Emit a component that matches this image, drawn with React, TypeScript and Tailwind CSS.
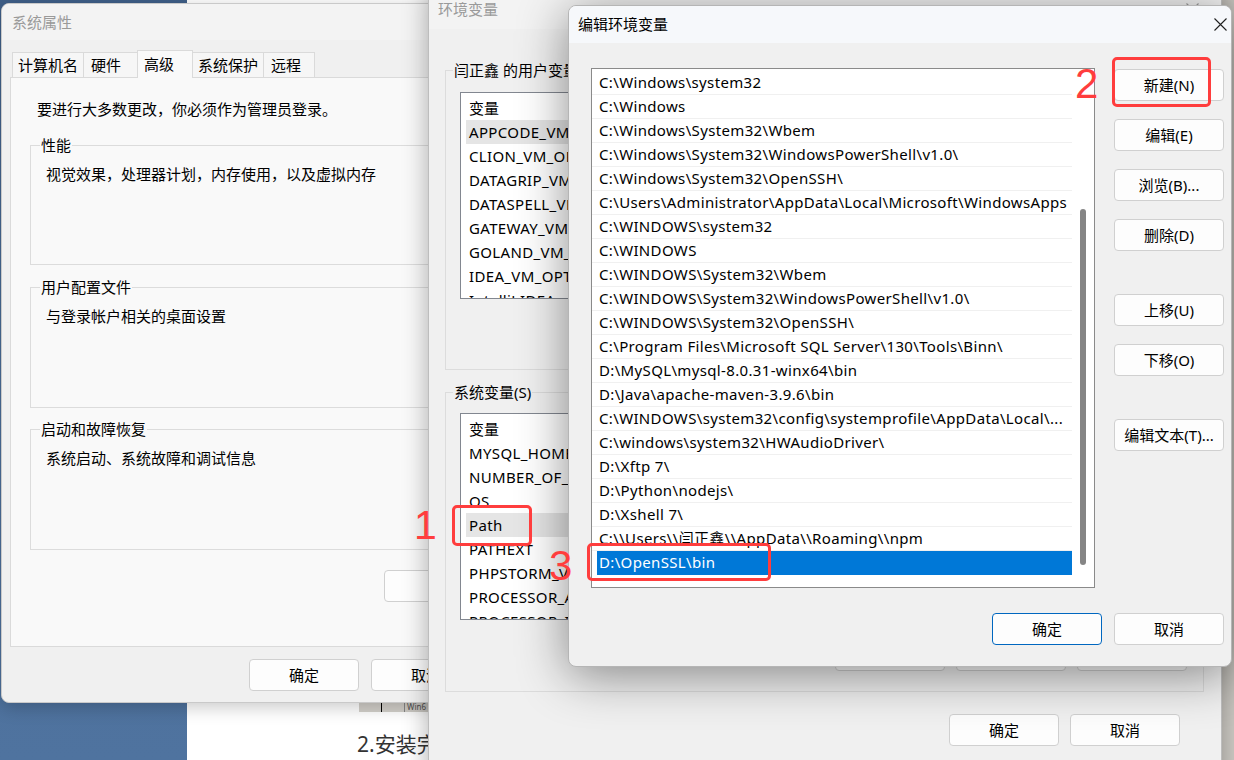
import React from "react";

const FONT = "font-['Noto_Sans','Noto_Sans_CJK_SC',sans-serif]";

const editItems = [
  "C:\\Windows\\system32",
  "C:\\Windows",
  "C:\\Windows\\System32\\Wbem",
  "C:\\Windows\\System32\\WindowsPowerShell\\v1.0\\",
  "C:\\Windows\\System32\\OpenSSH\\",
  "C:\\Users\\Administrator\\AppData\\Local\\Microsoft\\WindowsApps",
  "C:\\WINDOWS\\system32",
  "C:\\WINDOWS",
  "C:\\WINDOWS\\System32\\Wbem",
  "C:\\WINDOWS\\System32\\WindowsPowerShell\\v1.0\\",
  "C:\\WINDOWS\\System32\\OpenSSH\\",
  "C:\\Program Files\\Microsoft SQL Server\\130\\Tools\\Binn\\",
  "D:\\MySQL\\mysql-8.0.31-winx64\\bin",
  "D:\\Java\\apache-maven-3.9.6\\bin",
  "C:\\WINDOWS\\system32\\config\\systemprofile\\AppData\\Local\\...",
  "C:\\windows\\system32\\HWAudioDriver\\",
  "D:\\Xftp 7\\",
  "D:\\Python\\nodejs\\",
  "D:\\Xshell 7\\",
  "C:\\\\Users\\\\闫正鑫\\\\AppData\\\\Roaming\\\\npm",
];

const userVars = [
  "APPCODE_VM_OPTIONS",
  "CLION_VM_OPTIONS",
  "DATAGRIP_VM_OPTIONS",
  "DATASPELL_VM_OPTIONS",
  "GATEWAY_VM_OPTIONS",
  "GOLAND_VM_OPTIONS",
  "IDEA_VM_OPTIONS",
  "IntelliJ IDEA",
];

const sysVars = [
  "MYSQL_HOME",
  "NUMBER_OF_PROCESSORS",
  "OS",
  "Path",
  "PATHEXT",
  "PHPSTORM_VM_OPTIONS",
  "PROCESSOR_ARCHITECTURE",
  "PROCESSOR_IDENTIFIER",
];

function Btn({ children, primary = false }: { children?: React.ReactNode; primary?: boolean }) {
  return (
    <div
      className={
        primary
          ? "flex h-[32px] w-[110px] shrink-0 items-center justify-center rounded-[4px] border border-[#0067c0] bg-[#fdfdfd] text-[15px] text-black"
          : "flex h-[32px] w-[110px] shrink-0 items-center justify-center rounded-[4px] border border-[#d0d0d0] bg-[#fdfdfd] text-[15px] text-black"
      }
    >
      {children}
    </div>
  );
}

function CloseX({ color = "#202020" }: { color?: string }) {
  return (
    <svg width="13" height="13" viewBox="0 0 13 13">
      <path d="M0.5 0.5L12.5 12.5M12.5 0.5L0.5 12.5" stroke={color} strokeWidth="1.1" fill="none" />
    </svg>
  );
}

function GroupBox({ title, text, className }: { title: string; text: string; className: string }) {
  return (
    <div className={className}>
      <span className="absolute left-[9px] top-[-11px] bg-[#f9f9f9] px-[1px] leading-[20px]">{title}</span>
      <div className="pl-[15px] pt-[18px] leading-[20px]">{text}</div>
    </div>
  );
}

function SystemProperties() {
  return (
    <div className="absolute left-[1px] top-[3px] flex h-[700px] w-[560px] flex-col overflow-hidden rounded-[8px] border border-[#c9c9c9] bg-[#f0f0f0] text-[15px] text-black shadow-[0_4px_18px_rgba(0,0,0,0.22)]">
      <div className="flex h-[36px] items-center bg-[#f3f3f3] pl-[10px] text-[#9a9a9a]">系统属性</div>
      <div className="flex flex-col pl-[8px] pt-[10px]">
        <div className="flex h-[27px] items-end pl-[2px]">
          <div className="flex h-[25px] w-[71px] items-center border-l border-t border-[#dadada] bg-[#f6f6f6] pl-[5px]">计算机名</div>
          <div className="flex h-[25px] w-[54px] items-center border-l border-t border-[#dadada] bg-[#f6f6f6] pl-[7px]">硬件</div>
          <div className="relative z-10 mb-[-1px] flex h-[28px] w-[56px] items-start border-l border-r border-t border-[#dadada] bg-[#f9f9f9] pl-[6px] pt-[2px]">高级</div>
          <div className="flex h-[25px] w-[70px] items-center border-t border-[#dadada] bg-[#f6f6f6] pl-[5px]">系统保护</div>
          <div className="flex h-[25px] w-[52px] items-center border-l border-r border-t border-[#dadada] bg-[#f6f6f6] pl-[7px]">远程</div>
        </div>
        <div className="flex h-[570px] flex-col border border-[#dadada] bg-[#f9f9f9]">
          <div className="pl-[26px] pt-[21px] leading-[20px]">要进行大多数更改，你必须作为管理员登录。</div>
          <GroupBox
            className="relative ml-[19px] mr-[10px] mt-[26px] h-[120px] border border-[#dcdcdc]"
            title="性能"
            text="视觉效果，处理器计划，内存使用，以及虚拟内存"
          />
          <GroupBox
            className="relative ml-[19px] mr-[10px] mt-[22px] h-[121px] border border-[#dcdcdc]"
            title="用户配置文件"
            text="与登录帐户相关的桌面设置"
          />
          <GroupBox
            className="relative ml-[19px] mr-[10px] mt-[21px] h-[121px] border border-[#dcdcdc]"
            title="启动和故障恢复"
            text="系统启动、系统故障和调试信息"
          />
          <div className="ml-[373px] mt-[20px] flex h-[32px] w-[150px] items-center rounded-[4px] border border-[#d0d0d0] bg-[#fdfdfd] pl-[52px]">
            环境变量(N)...
          </div>
        </div>
      </div>
      <div className="mt-[12px] flex gap-[12px] pl-[247px]">
        <Btn>确定</Btn>
        <Btn>取消</Btn>
        <Btn>应用(A)</Btn>
      </div>
    </div>
  );
}

function VarList({ items, highlight, className }: { items: string[]; highlight: number; className: string }) {
  return (
    <div className={className}>
      <div className="flex h-[24px] shrink-0 items-center pl-[8px]">变量</div>
      {items.map((v, i) => (
        <div
          key={v}
          className={
            i === highlight
              ? "mx-[5px] flex h-[24px] shrink-0 items-center bg-[#e5e5e5] pl-[3px] tracking-[0.35px] whitespace-nowrap"
              : "mx-[5px] flex h-[24px] shrink-0 items-center pl-[3px] tracking-[0.35px] whitespace-nowrap"
          }
        >
          {v}
        </div>
      ))}
    </div>
  );
}

function EnvironmentVariables() {
  return (
    <div className="absolute left-[428px] top-[-12px] flex h-[800px] w-[794px] flex-col overflow-hidden rounded-[8px] border border-[#bdbdbd] bg-[#f0f0f0] text-[15px] text-black shadow-[0_0_26px_rgba(0,0,0,0.32)]">
      <div className="flex h-[40px] shrink-0 items-center justify-between bg-[#f3f3f3] pl-[9px] pr-[22px] pt-[1px] text-[#9a9a9a]">
        <span>环境变量</span>
        <CloseX color="#9a9a9a" />
      </div>
      <div className="relative ml-[16px] mt-[41px] h-[300px] w-[759px] shrink-0 border border-[#dcdcdc]">
        <span className="absolute left-[7px] top-[-11px] bg-[#f0f0f0] px-[1px] leading-[20px]">闫正鑫 的用户变量(U)</span>
        <VarList
          items={userVars}
          highlight={0}
          className="ml-[14px] mt-[21px] flex h-[207px] w-[730px] flex-col overflow-hidden border border-[#828790] bg-white pt-[3px]"
        />
        <div className="ml-[389px] mt-[17px] flex gap-[11px]">
          <Btn>新建(N)...</Btn>
          <Btn>编辑(E)...</Btn>
          <Btn>删除(D)</Btn>
        </div>
      </div>
      <div className="relative ml-[16px] mt-[22px] h-[300px] w-[759px] shrink-0 border border-[#dcdcdc]">
        <span className="absolute left-[7px] top-[-11px] bg-[#f0f0f0] px-[1px] leading-[20px]">系统变量(S)</span>
        <VarList
          items={sysVars}
          highlight={3}
          className="ml-[14px] mt-[20px] flex h-[207px] w-[730px] flex-col overflow-hidden border border-[#828790] bg-white pt-[3px]"
        />
        <div className="ml-[389px] mt-[19px] flex gap-[11px]">
          <Btn>新建(W)...</Btn>
          <Btn>编辑(I)...</Btn>
          <Btn>删除(L)</Btn>
        </div>
      </div>
      <div className="mt-[22px] flex justify-end gap-[11px] pr-[41px]">
        <Btn>确定</Btn>
        <Btn>取消</Btn>
      </div>
    </div>
  );
}

function EditDialog() {
  return (
    <div className="absolute left-[568px] top-[5px] flex h-[662px] w-[664px] flex-col overflow-hidden rounded-[8px] border border-[#b5b5b5] bg-[#f0f0f0] text-[15px] text-black shadow-[0_8px_50px_rgba(0,0,0,0.45)]">
      <div className="flex h-[37px] shrink-0 items-center justify-between bg-[#f6f8fb] pl-[9px] pr-[4px]">
        <span>编辑环境变量</span>
        <CloseX />
      </div>
      <div className="flex">
        <div className="ml-[22px] mt-[25px] flex h-[520px] w-[504px] border border-[#8a8a8a] bg-white">
          <div className="flex w-[480px] flex-col pt-[2px]">
            {editItems.map((t) => (
              <div key={t} className="h-[24px] shrink-0 border-b border-[#f0f0f0] pl-[7px] leading-[23px] tracking-[0.35px] whitespace-nowrap">
                {t}
              </div>
            ))}
            <div className="ml-[5px] h-[24px] shrink-0 bg-[#0078d7] pl-[2px] leading-[23px] tracking-[0.35px] text-white">D:\OpenSSL\bin</div>
          </div>
          <div className="w-[22px]">
            <div className="ml-[8px] mt-[140px] h-[356px] w-[6px] rounded-full bg-[#858585]" />
          </div>
        </div>
        <div className="ml-[19px] mt-[26px] flex flex-col">
          <Btn>新建(N)</Btn>
          <div className="mt-[18px]">
            <Btn>编辑(E)</Btn>
          </div>
          <div className="mt-[18px]">
            <Btn>浏览(B)...</Btn>
          </div>
          <div className="mt-[18px]">
            <Btn>删除(D)</Btn>
          </div>
          <div className="mt-[43px]">
            <Btn>上移(U)</Btn>
          </div>
          <div className="mt-[18px]">
            <Btn>下移(O)</Btn>
          </div>
          <div className="mt-[43px]">
            <Btn>编辑文本(T)...</Btn>
          </div>
        </div>
      </div>
      <div className="mt-[25px] flex justify-end gap-[12px] pr-[7px]">
        <Btn primary>确定</Btn>
        <Btn>取消</Btn>
      </div>
    </div>
  );
}

export default function App() {
  return (
    <div className={`relative h-[760px] w-[1234px] overflow-hidden bg-white ${FONT}`}>
      {/* desktop */}
      <div className="absolute left-0 top-0 h-full w-[187px] bg-gradient-to-b from-[#3f5f88] via-[#4b6e99] to-[#4f739f]" />
      {/* document behind */}
      <div className="absolute left-[359px] top-[702px] flex h-[10px] w-[75px] bg-[#d3d0ca] text-[8px] leading-[10px] text-[#555]">
        <div className="w-[23px] border-r border-black" />
        <div className="w-[23px] border-r border-[#888]" />
        <span className="pl-[2px]">Win6</span>
      </div>
      <div className="absolute left-[357px] top-[731px] text-[21px] leading-[26px] text-[#333]">2.安装完成</div>
      <div className="absolute left-[1222px] top-0 h-full w-[12px] bg-[#cfccc6]" />

      <SystemProperties />
      <EnvironmentVariables />
      <EditDialog />

      {/* annotations */}
      <div className="absolute left-[452px] top-[505px] h-[41px] w-[80px] rounded-[5px] border-[3px] border-[#ff3d3d]" />
      <div className="absolute left-[1112px] top-[57px] h-[50px] w-[99px] rounded-[5px] border-[3px] border-[#ff3d3d]" />
      <div className="absolute left-[587px] top-[543px] h-[38px] w-[184px] rounded-[5px] border-[3px] border-[#ff3d3d]" />
      <div className="absolute left-[414px] top-[503px] font-['Liberation_Sans',sans-serif] text-[41px] leading-[44px] text-[#ff3d3d]">1</div>
      <div className="absolute left-[1075px] top-[62px] font-['Liberation_Sans',sans-serif] text-[42px] leading-[44px] text-[#ff3d3d]">2</div>
      <div className="absolute left-[549px] top-[544px] font-['Liberation_Sans',sans-serif] text-[42px] leading-[44px] text-[#ff3d3d]">3</div>
    </div>
  );
}
